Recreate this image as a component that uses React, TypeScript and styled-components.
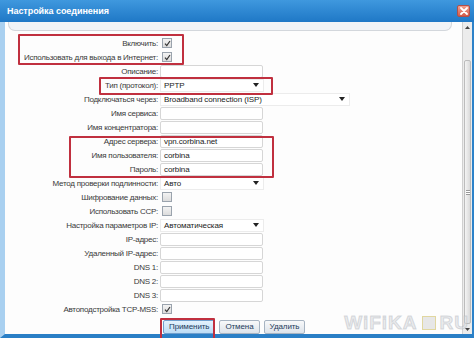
import React from 'react'
import styled, { createGlobalStyle } from 'styled-components'

const GlobalStyle = createGlobalStyle`
  html, body {
    margin: 0;
    padding: 0;
    background: #1f74c0;
  }
  * { box-sizing: border-box; }
`

type Kind = 'check' | 'input' | 'select'

interface Field {
  label: string
  kind: Kind
  value?: string
  checked?: boolean
  wide?: boolean
}

const fields: Field[] = [
  { label: 'Включить:', kind: 'check', checked: true },
  { label: 'Использовать для выхода в Интернет:', kind: 'check', checked: true },
  { label: 'Описание:', kind: 'input' },
  { label: 'Тип (протокол):', kind: 'select', value: 'PPTP' },
  { label: 'Подключаться через:', kind: 'select', value: 'Broadband connection (ISP)', wide: true },
  { label: 'Имя сервиса:', kind: 'input' },
  { label: 'Имя концентратора:', kind: 'input' },
  { label: 'Адрес сервера:', kind: 'input', value: 'vpn.corbina.net' },
  { label: 'Имя пользователя:', kind: 'input', value: 'corbina' },
  { label: 'Пароль:', kind: 'input', value: 'corbina' },
  { label: 'Метод проверки подлинности:', kind: 'select', value: 'Авто' },
  { label: 'Шифрование данных:', kind: 'check' },
  { label: 'Использовать CCP:', kind: 'check' },
  { label: 'Настройка параметров IP:', kind: 'select', value: 'Автоматическая' },
  { label: 'IP-адрес:', kind: 'input' },
  { label: 'Удаленный IP-адрес:', kind: 'input' },
  { label: 'DNS 1:', kind: 'input' },
  { label: 'DNS 2:', kind: 'input' },
  { label: 'DNS 3:', kind: 'input' },
  { label: 'Автоподстройка TCP-MSS:', kind: 'check', checked: true },
]

// красные рамки-выделения поверх формы (координаты относительно формы)
const marks = [
  { left: 13, top: 3, width: 166, height: 31 },
  { left: 94, top: 46, width: 174, height: 18 },
  { left: 64, top: 105, width: 205, height: 42 },
  { left: 155, top: 287, width: 55, height: 22 },
]

const App = () => {
  return (
    <>
      <GlobalStyle />
      <Window>
        <TitleBar>
          <Title>Настройка соединения</Title>
          <CloseBtn>
            <svg width="8" height="8" viewBox="0 0 8 8">
              <path d="M1 1 L7 7 M7 1 L1 7" stroke="#fff" strokeWidth="1.8" strokeLinecap="round" />
            </svg>
          </CloseBtn>
        </TitleBar>
        <Body>
          <Content>
            <HeaderStrip />
            <Form>
              {fields.map((f, i) => (
                <Row key={i}>
                  <Label>{f.label}</Label>
                  {f.kind === 'check' && (
                    <CheckBox>
                      {f.checked && (
                        <svg width="7" height="7" viewBox="0 0 7 7">
                          <path d="M1 3.6 L2.8 5.6 L6 1" stroke="#333" strokeWidth="1.2" fill="none" />
                        </svg>
                      )}
                    </CheckBox>
                  )}
                  {f.kind === 'input' && <Input>{f.value}</Input>}
                  {f.kind === 'select' && (
                    <Select $wide={f.wide}>
                      <span>{f.value}</span>
                      <svg width="6" height="4" viewBox="0 0 6 4">
                        <path d="M0 0 H6 L3 4 Z" fill="#222" />
                      </svg>
                    </Select>
                  )}
                </Row>
              ))}
              <Buttons>
                <Button $primary>Применить</Button>
                <Button>Отмена</Button>
                <Button>Удалить</Button>
              </Buttons>
              {marks.map((m, i) => (
                <Mark key={i} style={{ left: m.left, top: m.top, width: m.width, height: m.height }} />
              ))}
            </Form>
          </Content>
          <ScrollBar>
            <ScrollArrow>
              <svg width="5" height="3" viewBox="0 0 5 3">
                <path d="M0 3 H5 L2.5 0 Z" fill="#444" />
              </svg>
            </ScrollArrow>
            <ScrollTrack>
              <Thumb>
                <Grip />
              </Thumb>
            </ScrollTrack>
            <ScrollArrow>
              <svg width="5" height="3" viewBox="0 0 5 3">
                <path d="M0 0 H5 L2.5 3 Z" fill="#444" />
              </svg>
            </ScrollArrow>
          </ScrollBar>
          <Watermark>
            <span>WiFiKA</span>
            <Dot />
            <span>RU</span>
          </Watermark>
        </Body>
      </Window>
    </>
  )
}

export default App

const Window = styled.div`
  width: 474px;
  height: 338px;
  display: flex;
  flex-direction: column;
  overflow: hidden;
  font-family: "Liberation Sans", Arial, sans-serif;
  background: #2f86d0;
`

const TitleBar = styled.div`
  height: 22px;
  flex-shrink: 0;
  display: flex;
  align-items: center;
  justify-content: space-between;
  padding: 0 4px 0 7px;
  background: linear-gradient(#3f98de, #1f78c6);
`

const Title = styled.div`
  color: #fff;
  font-weight: bold;
  font-size: 9px;
  letter-spacing: -0.05px;
`

const CloseBtn = styled.div`
  width: 13px;
  height: 12px;
  display: flex;
  align-items: center;
  justify-content: center;
  border: 1px solid #b0504a;
  border-radius: 2px;
  background: linear-gradient(#f0a090, #d65a48);
`

const Body = styled.div`
  flex: 1;
  position: relative;
  display: flex;
  border-left: 5px solid #a9d0f0;
  border-right: 2px solid #2d82c9;
  border-bottom: 4px solid #2a7fc6;
  min-height: 0;
`

const Content = styled.div`
  flex: 1;
  background: #fdfdfd;
  display: flex;
  flex-direction: column;
`

const HeaderStrip = styled.div`
  height: 9px;
  margin: 0 10px 0 3px;
  background: #f1f4f7;
  border: 1px solid #d3d7dc;
  border-top: none;
  border-radius: 0 0 7px 7px;
`

const Form = styled.div`
  position: relative;
  display: flex;
  flex-direction: column;
  padding-top: 5px;
`

const Row = styled.div`
  height: 14px;
  display: grid;
  grid-template-columns: 153px 1fr;
  column-gap: 2px;
  align-items: center;
`

const Label = styled.div`
  text-align: right;
  font-size: 8px;
  letter-spacing: -0.25px;
  color: #3a3a3a;
  white-space: nowrap;
`

const CheckBox = styled.div`
  width: 10px;
  height: 10px;
  margin-left: 2px;
  border: 1px solid #9aa3ad;
  background: linear-gradient(#f3f3f3, #dcdcdc);
  display: flex;
  align-items: center;
  justify-content: center;
`

const Input = styled.div`
  width: 103px;
  height: 13px;
  border: 1px solid #d6d6d6;
  border-radius: 2px;
  background: #fff;
  font-size: 8px;
  letter-spacing: -0.1px;
  color: #222;
  padding: 0 3px;
  line-height: 11px;
  white-space: nowrap;
`

const Select = styled.div<{ $wide?: boolean }>`
  width: ${(p) => (p.$wide ? '190px' : '104px')};
  height: 13px;
  border: 1px solid #ececec;
  background: #fff;
  font-size: 8px;
  letter-spacing: -0.1px;
  color: #222;
  padding: 0 4px 0 3px;
  display: flex;
  align-items: center;
  justify-content: space-between;
  white-space: nowrap;
`

const Buttons = styled.div`
  display: flex;
  gap: 4px;
  margin: 4px 0 0 158px;
`

const Button = styled.div<{ $primary?: boolean }>`
  height: 14px;
  padding: 0 5px;
  font-size: 8px;
  letter-spacing: -0.1px;
  line-height: 12px;
  color: #1f3b5c;
  border: 1px solid ${(p) => (p.$primary ? '#6f9fce' : '#a7b4c2')};
  border-radius: 2px;
  background: ${(p) =>
    p.$primary ? 'linear-gradient(#e4f2fd, #bcdcf5)' : 'linear-gradient(#f8f9fa, #dde3ea)'};
`

const Mark = styled.div`
  position: absolute;
  border: 2px solid #c0303f;
  border-radius: 1px;
  pointer-events: none;
`

const Watermark = styled.div`
  position: absolute;
  right: 3px;
  bottom: 0px;
  display: flex;
  align-items: center;
  gap: 4px;
  font-size: 19px;
  font-weight: bold;
  letter-spacing: 1px;
  color: rgba(215, 218, 222, 0.5);
  -webkit-text-stroke: 1px rgba(175, 180, 186, 0.45);
  pointer-events: none;
`

const Dot = styled.div`
  width: 14px;
  height: 14px;
  border: 1px solid rgba(220, 200, 90, 0.5);
  background: rgba(190, 190, 190, 0.35);
`

const ScrollBar = styled.div`
  width: 10px;
  display: flex;
  flex-direction: column;
  background: #ececec;
  border-left: 1px solid #d0d0d0;
`

const ScrollArrow = styled.div`
  height: 10px;
  display: flex;
  align-items: center;
  justify-content: center;
`

const ScrollTrack = styled.div`
  flex: 1;
  display: flex;
  flex-direction: column;
  padding-top: 28px;
`

const Thumb = styled.div`
  flex: 1;
  margin: 0 1px;
  border: 1px solid #bcbcbc;
  border-radius: 2px;
  background: linear-gradient(90deg, #f4f4f4, #dadada);
  display: flex;
  align-items: center;
  justify-content: center;
`

const Grip = styled.div`
  width: 4px;
  height: 5px;
  border-top: 1px solid #999;
  border-bottom: 1px solid #999;
  background: linear-gradient(#fff 40%, #999 40%, #999 60%, #fff 60%);
`
